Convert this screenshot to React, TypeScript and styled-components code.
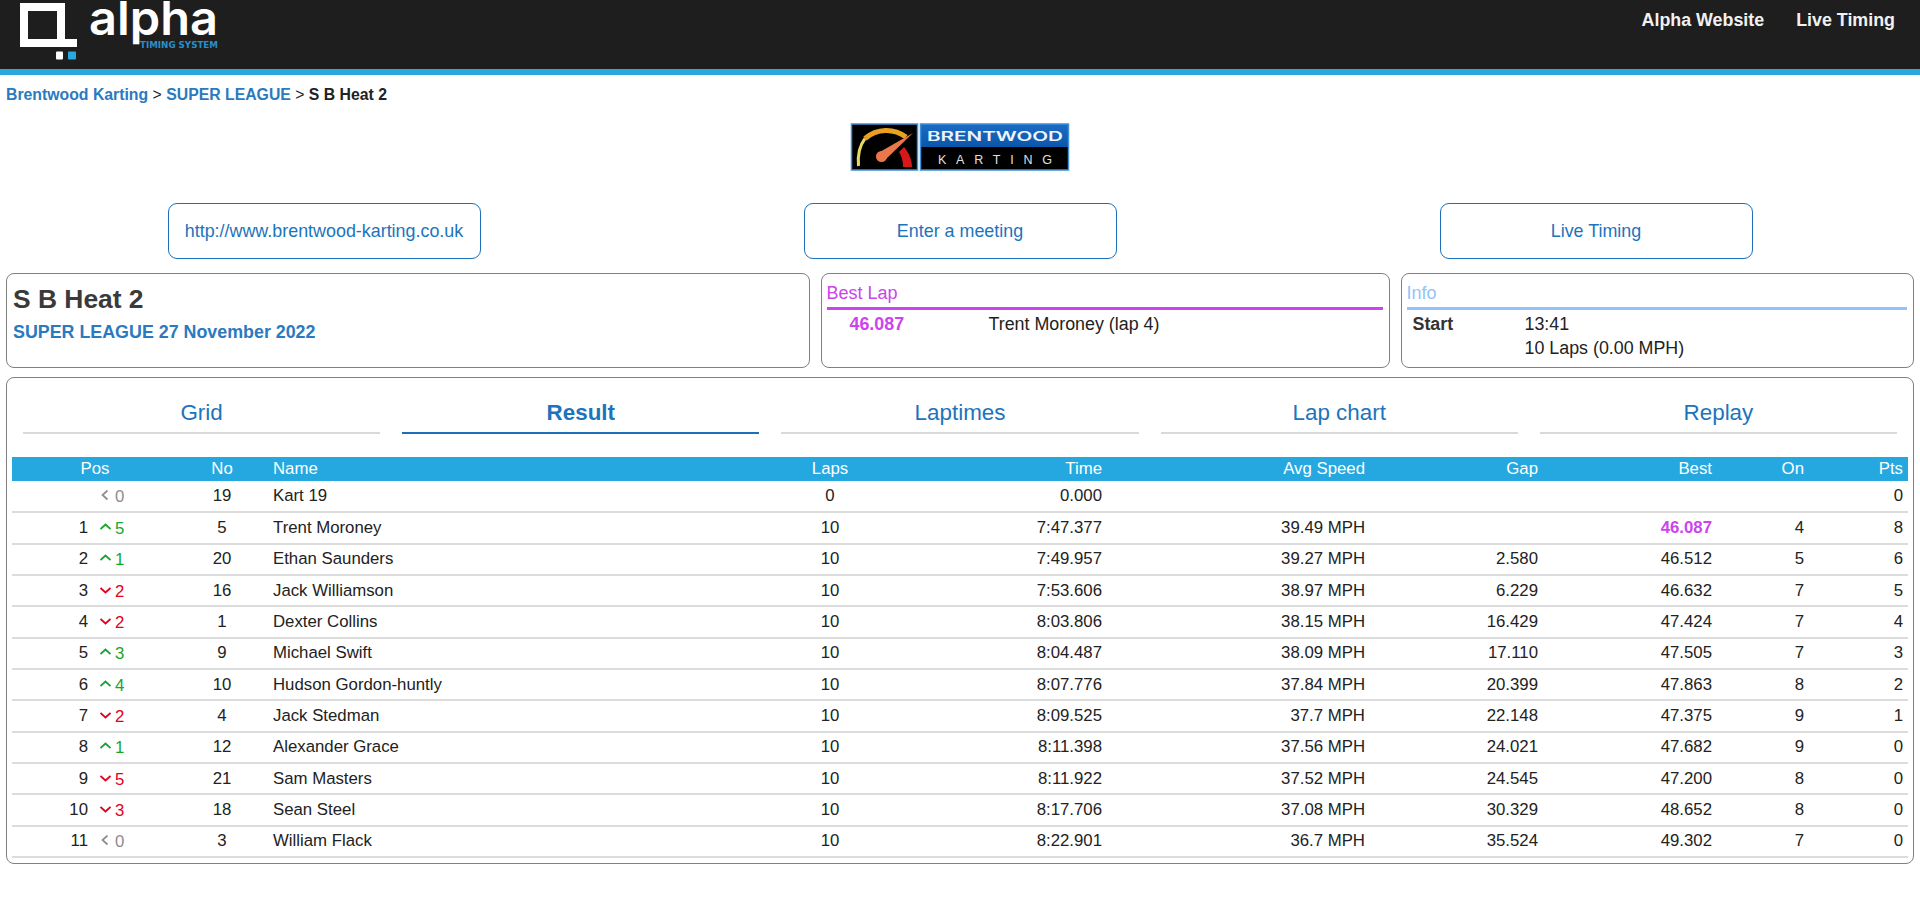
import * as React from 'react';
import styled, { createGlobalStyle } from 'styled-components';

const GlobalStyle = createGlobalStyle`
  html, body {
    margin: 0;
    padding: 0;
    background: #fff;
    font-family: "Liberation Sans", Arial, sans-serif;
    color: #222;
  }
`;

const TopBar = styled.header`
  height: 69px;
  background: #1e1e1e;
  border-bottom: 6px solid #29a7df;
  display: flex;
  justify-content: space-between;
  align-items: flex-start;
  overflow: hidden;
`;

const BrandLogo = styled.svg`
  display: block;
  margin-left: 18px;
`;

const TopNav = styled.nav`
  display: flex;
  gap: 32px;
  padding: 10px 25px 0 0;
`;

const TopLink = styled.a`
  color: #f1f1f1;
  font-size: 17.85px;
  font-weight: 700;
  line-height: 21px;
`;

const Page = styled.main`
  padding: 0 6px;
`;

const Crumbs = styled.div`
  padding-top: 10px;
  font-size: 15.8px;
  font-weight: 700;
  line-height: 19px;
  color: #222;
`;

const CrumbLink = styled.a`
  color: #2a7ac0;
`;

const CrumbSep = styled.span`
  font-weight: 400;
`;

const LogoRow = styled.div`
  display: flex;
  justify-content: center;
  padding-top: 19px;
`;

const ButtonRow = styled.div`
  display: grid;
  grid-template-columns: repeat(3, 1fr);
  justify-items: center;
  padding-top: 32px;
`;

const LinkButton = styled.a`
  box-sizing: border-box;
  width: 313px;
  height: 56px;
  display: flex;
  align-items: center;
  justify-content: center;
  border: 1px solid #1c6fb8;
  border-radius: 9px;
  color: #1c74bc;
  font-size: 17.9px;
`;

const InfoRow = styled.div`
  display: grid;
  grid-template-columns: 804px 569.5px 513.5px;
  gap: 10.5px;
  padding-top: 14px;
`;

const Panel = styled.section`
  box-sizing: border-box;
  height: 95px;
  border: 1px solid #808080;
  border-radius: 8px;
  padding: 0 6px 0 5px;
`;

const HeatTitle = styled.h1`
  margin: 10px 0 0 1px;
  font-size: 26.4px;
  line-height: 30px;
  font-weight: 700;
  color: #3a3a3a;
`;

const HeatSub = styled.div`
  margin: 8px 0 0 1px;
  font-size: 17.85px;
  line-height: 21px;
  font-weight: 700;
  color: #2a7ac0;
`;

const PanelTitle = styled.div<{ $color: string }>`
  padding-top: 9px;
  height: 24px;
  font-size: 18px;
  line-height: 20px;
  color: ${(p) => p.$color};
  border-bottom: 3px solid ${(p) => p.$color};
`;

const FactRow = styled.div`
  display: flex;
  font-size: 17.85px;
  line-height: 24px;
`;

const FactLabel = styled.div<{ $width: number; $indent: number; $color?: string }>`
  box-sizing: border-box;
  width: ${(p) => p.$width}px;
  padding-left: ${(p) => p.$indent}px;
  font-weight: 700;
  color: ${(p) => p.$color || '#333'};
`;

const FactFirst = styled.div`
  padding-top: 2px;
`;

const MainPanel = styled.section`
  box-sizing: border-box;
  margin-top: 9px;
  height: 487px;
  border: 1px solid #808080;
  border-radius: 8px;
  padding: 0 5px;
`;

const Tabs = styled.div`
  display: flex;
  gap: 22px;
  padding: 0 11px;
`;

const Tab = styled.a<{ $active?: boolean }>`
  flex: 1;
  box-sizing: border-box;
  height: 56px;
  padding-top: 22px;
  text-align: center;
  font-size: 22.4px;
  line-height: 26px;
  color: #1c74bc;
  font-weight: ${(p) => (p.$active ? 700 : 400)};
  border-bottom: 2px solid ${(p) => (p.$active ? '#1c6fb8' : '#d9d9d9')};
`;

const Results = styled.table`
  width: 1896px;
  margin-top: 23px;
  table-layout: fixed;
  border-collapse: collapse;
  font-size: 16.8px;
`;

const Col = styled.col<{ $w: number }>`
  width: ${(p) => p.$w}px;
`;

const HeadRow = styled.tr`
  height: 24px;
  background: #25a8e0;
  color: #fff;
`;

const Head = styled.th<{ $align?: string; $indent?: number }>`
  padding: 0 5px 0 ${(p) => p.$indent || 5}px;
  font-weight: 400;
  text-align: ${(p) => p.$align || 'right'};
  line-height: 18px;
`;

const Row = styled.tr`
  height: 31.33px;
  border-bottom: 2px solid #dcdcdc;
`;

const Cell = styled.td<{ $align?: string; $best?: boolean }>`
  padding: 0 5px;
  text-align: ${(p) => p.$align || 'right'};
  color: ${(p) => (p.$best ? '#cc44ee' : '#222')};
  font-weight: ${(p) => (p.$best ? 700 : 400)};
`;

const NameCell = styled(Cell)`
  padding-left: 7px;
`;

const PosCell = styled.td`
  padding: 0;
`;

const PosWrap = styled.div`
  display: flex;
  align-items: center;
`;

const PosNum = styled.span`
  width: 76px;
  text-align: right;
`;

const Delta = styled.span<{ $color: string }>`
  display: flex;
  align-items: center;
  margin-left: 12px;
  color: ${(p) => p.$color};
`;

const DeltaNum = styled.span`
  margin-left: 4px;
  padding-top: 2px;
`;

const Chevron = ({ dir }: { dir: 'up' | 'down' | 'same' }) => (
  <svg width="11" height="12" viewBox="0 0 11 12" fill="none" stroke="currentColor" strokeWidth="1.7">
    {dir === 'up' && <path d="M.5 7 5.5 2.5 10.5 7" />}
    {dir === 'down' && <path d="M.5 3 5.5 7.5 10.5 3" />}
    {dir === 'same' && <path d="M7.5 .5 2.5 5 7.5 9.5" />}
  </svg>
);

type Kart = {
  pos: string;
  dir: 'up' | 'down' | 'same';
  delta: number;
  no: number;
  name: string;
  laps: number;
  time: string;
  speed: string;
  gap: string;
  best: string;
  on: string;
  pts: number;
  fastest?: boolean;
};

const karts: Kart[] = [
  { pos: '', dir: 'same', delta: 0, no: 19, name: 'Kart 19', laps: 0, time: '0.000', speed: '', gap: '', best: '', on: '', pts: 0 },
  { pos: '1', dir: 'up', delta: 5, no: 5, name: 'Trent Moroney', laps: 10, time: '7:47.377', speed: '39.49 MPH', gap: '', best: '46.087', on: '4', pts: 8, fastest: true },
  { pos: '2', dir: 'up', delta: 1, no: 20, name: 'Ethan Saunders', laps: 10, time: '7:49.957', speed: '39.27 MPH', gap: '2.580', best: '46.512', on: '5', pts: 6 },
  { pos: '3', dir: 'down', delta: 2, no: 16, name: 'Jack Williamson', laps: 10, time: '7:53.606', speed: '38.97 MPH', gap: '6.229', best: '46.632', on: '7', pts: 5 },
  { pos: '4', dir: 'down', delta: 2, no: 1, name: 'Dexter Collins', laps: 10, time: '8:03.806', speed: '38.15 MPH', gap: '16.429', best: '47.424', on: '7', pts: 4 },
  { pos: '5', dir: 'up', delta: 3, no: 9, name: 'Michael Swift', laps: 10, time: '8:04.487', speed: '38.09 MPH', gap: '17.110', best: '47.505', on: '7', pts: 3 },
  { pos: '6', dir: 'up', delta: 4, no: 10, name: 'Hudson Gordon-huntly', laps: 10, time: '8:07.776', speed: '37.84 MPH', gap: '20.399', best: '47.863', on: '8', pts: 2 },
  { pos: '7', dir: 'down', delta: 2, no: 4, name: 'Jack Stedman', laps: 10, time: '8:09.525', speed: '37.7 MPH', gap: '22.148', best: '47.375', on: '9', pts: 1 },
  { pos: '8', dir: 'up', delta: 1, no: 12, name: 'Alexander Grace', laps: 10, time: '8:11.398', speed: '37.56 MPH', gap: '24.021', best: '47.682', on: '9', pts: 0 },
  { pos: '9', dir: 'down', delta: 5, no: 21, name: 'Sam Masters', laps: 10, time: '8:11.922', speed: '37.52 MPH', gap: '24.545', best: '47.200', on: '8', pts: 0 },
  { pos: '10', dir: 'down', delta: 3, no: 18, name: 'Sean Steel', laps: 10, time: '8:17.706', speed: '37.08 MPH', gap: '30.329', best: '48.652', on: '8', pts: 0 },
  { pos: '11', dir: 'same', delta: 0, no: 3, name: 'William Flack', laps: 10, time: '8:22.901', speed: '36.7 MPH', gap: '35.524', best: '49.302', on: '7', pts: 0 },
];

const deltaColors = { up: '#16a52e', down: '#e2001a', same: '#8c8c8c' };
const colWidths = [166, 88, 500, 128, 213, 263, 173, 174, 92, 99];

const AlphaLogo = () => (
  <BrandLogo width="210" height="69" viewBox="0 0 210 69">
    <path d="M2 3h45v36h12v8H2z M10 11v28h29V11z" fill="#fff" fillRule="evenodd" />
    <rect x="38" y="51.5" width="7" height="8" rx="1" fill="#fff" />
    <rect x="50" y="51.5" width="8" height="8" rx="1" fill="#29a7df" />
    <text x="71" y="35" fontFamily="Inter, sans-serif" fontSize="47" fontWeight="600" fill="#fff" textLength="129" lengthAdjust="spacingAndGlyphs">
      alpha
    </text>
    <text x="122" y="48" fontFamily="'DejaVu Sans', sans-serif" fontSize="8" fontWeight="700" fill="#2a8fc9" textLength="78" lengthAdjust="spacingAndGlyphs">
      TIMING SYSTEM
    </text>
  </BrandLogo>
);

const KartingLogo = () => (
  <svg width="220" height="48" viewBox="0 0 220 48">
    <defs>
      <linearGradient id="brentwoodBlue" x1="0" y1="0" x2="0" y2="1">
        <stop offset="0" stopColor="#1c6cc4" />
        <stop offset="1" stopColor="#0a55a8" />
      </linearGradient>
    </defs>
    <rect x="1.5" y="1" width="66" height="46" fill="#000" stroke="#3f8fdc" strokeWidth="1.5" />
    <path d="M8.5 43C7.5 32 10 22 15 15.5" fill="none" stroke="#e8d860" strokeWidth="3" />
    <path d="M15 15.5C27 5 44 5 56 14" fill="none" stroke="#e8a020" strokeWidth="5" />
    <path d="M54 24C59 30 62 37 62 44H53C53 38 52 34 49 29Z" fill="#d81818" />
    <path d="M28 30 63 10 35 37Z" fill="#e8784a" />
    <circle cx="31.5" cy="33.5" r="5.5" fill="#e8784a" />
    <rect x="70.5" y="1" width="148" height="24" fill="url(#brentwoodBlue)" />
    <rect x="70.5" y="24" width="148" height="23" fill="#000" />
    <rect x="70.5" y="1" width="148" height="46" fill="none" stroke="#3f8fdc" strokeWidth="1.5" />
    <text x="77" y="18" fontFamily="Inter, sans-serif" fontSize="12.5" fontWeight="600" fill="#eef4fb" textLength="136" lengthAdjust="spacingAndGlyphs">
      BRENTWOOD
    </text>
    <text x="88" y="40.5" fontFamily="'Liberation Sans', sans-serif" fontSize="12.5" fill="#e0e0e0" textLength="114">
      KARTING
    </text>
  </svg>
);

export default function App() {
  return (
    <>
      <GlobalStyle />
      <TopBar>
        <AlphaLogo />
        <TopNav>
          <TopLink>Alpha Website</TopLink>
          <TopLink>Live Timing</TopLink>
        </TopNav>
      </TopBar>
      <Page>
        <Crumbs>
          <CrumbLink>Brentwood Karting</CrumbLink> <CrumbSep>&gt;</CrumbSep> <CrumbLink>SUPER LEAGUE</CrumbLink>{' '}
          <CrumbSep>&gt;</CrumbSep> S B Heat 2
        </Crumbs>
        <LogoRow>
          <KartingLogo />
        </LogoRow>
        <ButtonRow>
          <LinkButton>http://www.brentwood-karting.co.uk</LinkButton>
          <LinkButton>Enter a meeting</LinkButton>
          <LinkButton>Live Timing</LinkButton>
        </ButtonRow>
        <InfoRow>
          <Panel>
            <HeatTitle>S B Heat 2</HeatTitle>
            <HeatSub>SUPER LEAGUE 27 November 2022</HeatSub>
          </Panel>
          <Panel>
            <PanelTitle $color="#cc44ee">Best Lap</PanelTitle>
            <FactFirst>
              <FactRow>
                <FactLabel $width={162} $indent={23} $color="#cc44ee">
                  46.087
                </FactLabel>
                <div>Trent Moroney (lap 4)</div>
              </FactRow>
            </FactFirst>
          </Panel>
          <Panel>
            <PanelTitle $color="#93c3f8">Info</PanelTitle>
            <FactFirst>
              <FactRow>
                <FactLabel $width={118} $indent={6}>
                  Start
                </FactLabel>
                <div>13:41</div>
              </FactRow>
              <FactRow>
                <FactLabel $width={118} $indent={6} />
                <div>10 Laps (0.00 MPH)</div>
              </FactRow>
            </FactFirst>
          </Panel>
        </InfoRow>
        <MainPanel>
          <Tabs>
            <Tab>Grid</Tab>
            <Tab $active>Result</Tab>
            <Tab>Laptimes</Tab>
            <Tab>Lap chart</Tab>
            <Tab>Replay</Tab>
          </Tabs>
          <Results>
            <colgroup>
              {colWidths.map((w, i) => (
                <Col key={i} $w={w} />
              ))}
            </colgroup>
            <thead>
              <HeadRow>
                <Head $align="center">Pos</Head>
                <Head $align="center">No</Head>
                <Head $align="left" $indent={7}>
                  Name
                </Head>
                <Head $align="center">Laps</Head>
                <Head>Time</Head>
                <Head>Avg Speed</Head>
                <Head>Gap</Head>
                <Head>Best</Head>
                <Head>On</Head>
                <Head>Pts</Head>
              </HeadRow>
            </thead>
            <tbody>
              {karts.map((k) => (
                <Row key={k.no}>
                  <PosCell>
                    <PosWrap>
                      <PosNum>{k.pos}</PosNum>
                      <Delta $color={deltaColors[k.dir]}>
                        <Chevron dir={k.dir} />
                        <DeltaNum>{k.delta}</DeltaNum>
                      </Delta>
                    </PosWrap>
                  </PosCell>
                  <Cell $align="center">{k.no}</Cell>
                  <NameCell $align="left">{k.name}</NameCell>
                  <Cell $align="center">{k.laps}</Cell>
                  <Cell>{k.time}</Cell>
                  <Cell>{k.speed}</Cell>
                  <Cell>{k.gap}</Cell>
                  <Cell $best={k.fastest}>{k.best}</Cell>
                  <Cell>{k.on}</Cell>
                  <Cell>{k.pts}</Cell>
                </Row>
              ))}
            </tbody>
          </Results>
        </MainPanel>
      </Page>
    </>
  );
}
